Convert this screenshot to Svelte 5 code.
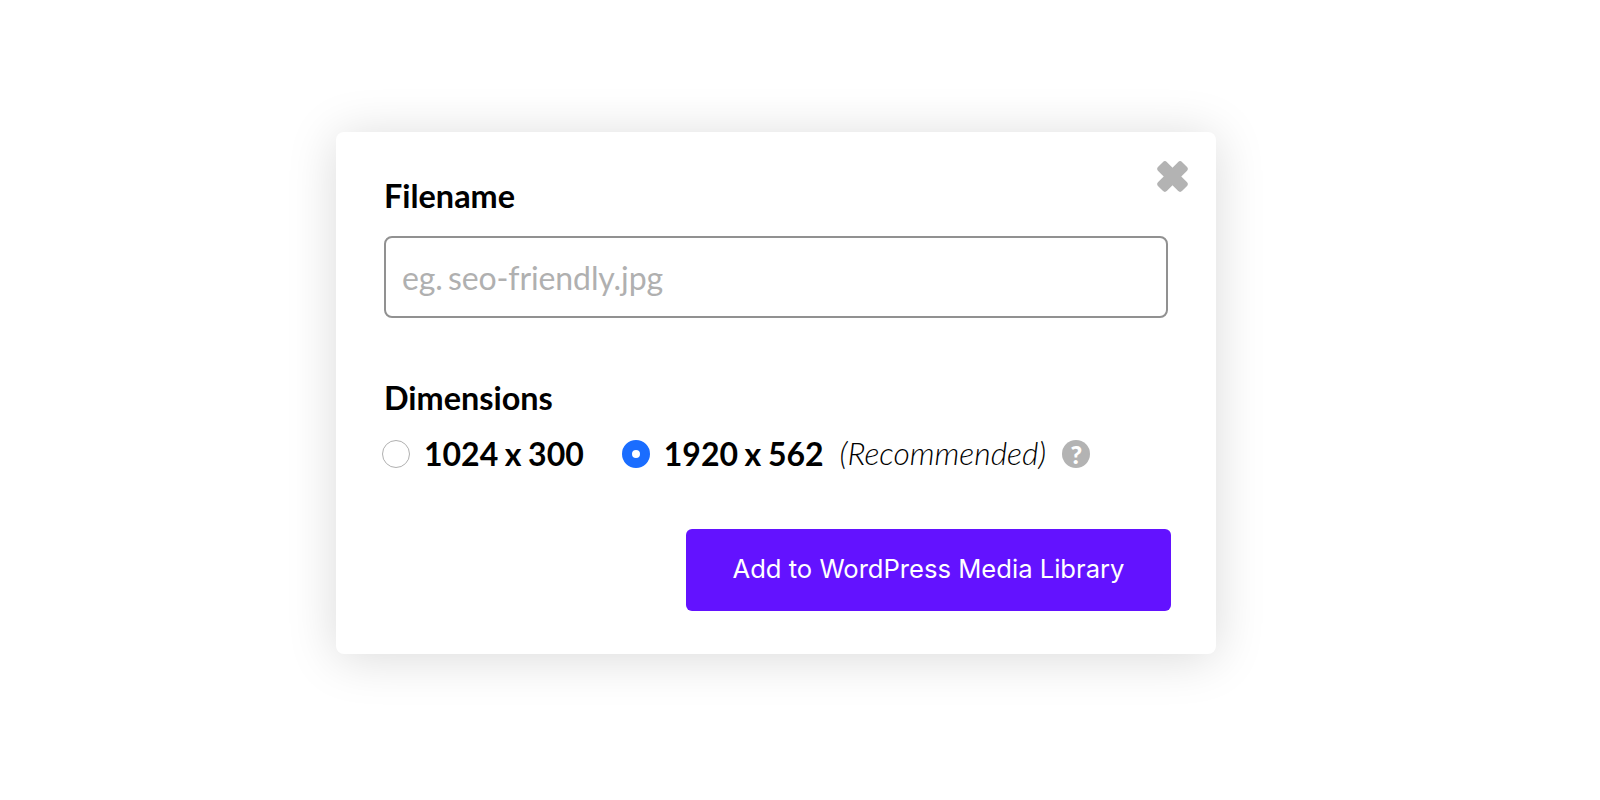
<script>
  let filename = $state('');
  let size = $state('1920');
</script>

<div class="page">
  <div class="modal">
    <button class="close" aria-label="Close">
      <svg width="33" height="33" viewBox="0 0 33 33">
        <g fill="#b3b3b3" transform="rotate(45 16.5 16.5)">
          <rect x="-0.5" y="10.25" width="34" height="12.5" rx="3" />
          <rect x="10.25" y="-0.5" width="12.5" height="34" rx="3" />
        </g>
      </svg>
    </button>

    <label class="heading" for="filename">Filename</label>
    <input id="filename" type="text" placeholder="eg. seo-friendly.jpg" bind:value={filename} />

    <div class="heading dims">Dimensions</div>
    <div class="options">
      <button class="option" onclick={() => (size = '1024')}>
        <span class="radio" class:on={size === '1024'}></span>
        <span class="value">1024 x 300</span>
      </button>
      <button class="option second" onclick={() => (size = '1920')}>
        <span class="radio" class:on={size === '1920'}></span>
        <span class="value">1920 x 562</span>
      </button>
      <em>(Recommended)</em>
      <span class="help">?</span>
    </div>

    <div class="actions">
      <button class="submit">Add to WordPress Media Library</button>
    </div>
  </div>
</div>

<style>
  :global(body) {
    background: #fff;
  }
  .page {
    height: 800px;
    padding: 132px 0 0 336px;
    box-sizing: border-box;
    font-family: Lato, sans-serif;
    color: #000;
    overflow: hidden;
  }
  .modal {
    position: relative;
    width: 880px;
    height: 522px;
    box-sizing: border-box;
    padding: 45px 48px 0;
    background: #fff;
    border-radius: 8px;
    box-shadow: 0 4px 50px rgba(0, 0, 0, 0.15);
  }
  button {
    border: none;
    background: none;
    padding: 0;
    font: inherit;
    color: inherit;
    cursor: pointer;
  }
  .close {
    position: absolute;
    top: 28px;
    right: 27px;
    width: 33px;
    height: 33px;
  }
  .heading {
    display: block;
    font-size: 32.4px;
    font-weight: 700;
    line-height: 38px;
  }
  input {
    display: block;
    width: 784px;
    height: 82px;
    margin-top: 21px;
    padding: 0 16px;
    box-sizing: border-box;
    border: 2px solid #919191;
    border-radius: 8px;
    font: 32px Lato, sans-serif;
    letter-spacing: -0.1px;
    word-spacing: -3px;
    outline: none;
  }
  input::placeholder {
    color: #b0b0b0;
    opacity: 1;
  }
  .dims {
    margin-top: 61px;
  }
  .options {
    display: flex;
    align-items: center;
    margin: 17px 0 0 -2px;
    height: 40px;
    font-size: 32px;
    font-weight: 700;
  }
  .option {
    display: flex;
    align-items: center;
    gap: 14px;
    font-weight: 700;
    word-spacing: -1.2px;
  }
  .value {
    padding-bottom: 2px;
  }
  .second {
    margin-left: 38px;
  }
  .radio {
    width: 28px;
    height: 28px;
    box-sizing: border-box;
    border: 1.5px solid #b0b0b0;
    border-radius: 50%;
    background: #fff;
  }
  .radio.on {
    border: 10px solid #1a6dff;
  }
  em {
    margin-left: 16px;
    padding-bottom: 2px;
    font-size: 31.8px;
    font-weight: 300;
    font-style: italic;
  }
  .help {
    width: 28px;
    height: 28px;
    margin-left: 16px;
    border-radius: 50%;
    background: #b3b3b3;
    color: #fff;
    font-size: 25px;
    font-weight: 900;
    line-height: 28px;
    text-align: center;
  }
  .actions {
    display: flex;
    justify-content: flex-end;
    margin: 55px -3px 0 0;
  }
  .submit {
    width: 485px;
    height: 82px;
    padding-bottom: 4px;
    border-radius: 6px;
    background: #6312ff;
    color: #fff;
    font-family: Inter, sans-serif;
    font-size: 25.6px;
    font-weight: 400;
  }
</style>
